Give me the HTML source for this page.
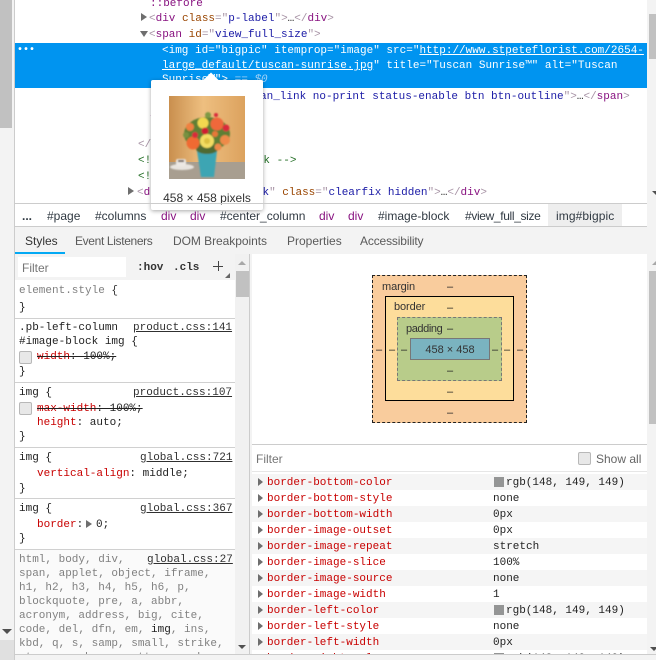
<!DOCTYPE html>
<html><head><meta charset="utf-8"><style>
html,body{margin:0;padding:0;background:#fff}
#r{position:relative;width:656px;height:660px;overflow:hidden;background:#fff;font-family:"Liberation Mono",monospace;font-size:11px;color:#222}
#r div{position:absolute;white-space:pre}
.t{line-height:16px;height:16px}
.t:not(.u){margin-top:1px}
.u{font-family:"Liberation Sans",sans-serif;font-size:12px}
.g{color:#a894a6}.p{color:#881280}.n{color:#994500}.v{color:#1a1aa6}.c{color:#236e25}
.k{color:#c80000}.m{color:#808080}.l{color:#303030;text-decoration:underline}
.tri{width:0;height:0;border-style:solid;border-color:transparent}
.h{height:1px;background:#d0d0d0}
.cb{width:11px;height:11px;background:#e8e8e8;border:1px solid #b8b8b8;border-radius:2px}
s{text-decoration-color:#222}
</style></head><body><div id="r">
<div style="left:0;top:0;width:15px;height:660px;background:#f3f3f3;border-right:1px solid #ccc;box-sizing:border-box"></div>
<div style="left:0;top:0;width:12px;height:128px;background:#c1c1c1"></div>
<div style="left:0;top:640px;width:14px;height:20px;background:#e0e0e0"></div>
<div class="tri" style="left:2px;top:629px;border-width:5px 5px 0;border-top-color:#505050"></div>

<div style="left:647px;top:0;width:9px;height:660px;background:#f3f3f3"></div>
<div style="left:649px;top:14px;width:7px;height:45px;background:#c1c1c1"></div>
<div style="left:649px;top:271px;width:7px;height:153px;background:#c1c1c1"></div>
<div class="tri" style="left:652px;top:191px;border-width:4px 4px 0;border-top-color:#505050"></div>
<div class="tri" style="left:652px;top:261px;border-width:0 4px 4px;border-bottom-color:#a8a8a8"></div>

<div class="t" style="left:150px;top:-5px;color:#881280">::before</div>
<div class="tri" style="left:141px;top:13px;border-width:4px 0 4px 6px;border-left-color:#6e6e6e"></div>
<div class="t" style="left:149px;top:10px"><span class="g">&lt;</span><span class="p">div</span> <span class="n">class</span><span class="g">="</span><span class="v">p-label</span><span class="g">"&gt;</span>…<span class="g">&lt;/</span><span class="p">div</span><span class="g">&gt;</span></div>
<div class="tri" style="left:140px;top:31px;border-width:6px 4px 0;border-top-color:#6e6e6e"></div>
<div class="t" style="left:149px;top:26px"><span class="g">&lt;</span><span class="p">span</span> <span class="n">id</span><span class="g">="</span><span class="v">view_full_size</span><span class="g">"&gt;</span></div>

<div style="left:15px;top:43px;width:632px;height:45px;background:#0094f0"></div>
<div style="left:17px;top:44px;color:#fff;font-weight:bold;line-height:14px;font-size:10px">•••</div>
<div class="t" style="left:162px;top:42px;color:#fff">&lt;img id="bigpic" itemprop="image" src="<u>http://www.stpeteflorist.com/2654-</u></div>
<div class="t" style="left:162px;top:57px;color:#fff"><u>large_default/tuscan-sunrise.jpg</u>" title="Tuscan Sunrise™" alt="Tuscan</div>
<div class="t" style="left:162px;top:71px;color:#fff">Sunrise™"&gt; <span style="color:#9fd2f8">== <i>$0</i></span></div>

<div class="t" style="left:260px;top:88px"><span class="v">an_link no-print status-enable btn btn-outline</span><span class="g">"&gt;</span>…<span class="g">&lt;/</span><span class="p">span</span><span class="g">&gt;</span></div>
<div class="t" style="left:150px;top:105px;color:#881280">/</div>
<div class="t" style="left:138px;top:136px"><span class="g">&lt;/</span></div>
<div class="t" style="left:138px;top:152px;color:#236e25">&lt;!-- end image-block --&gt;</div>
<div class="t" style="left:138px;top:168px;color:#236e25">&lt;!</div>
<div class="tri" style="left:128px;top:187px;border-width:4px 0 4px 6px;border-left-color:#6e6e6e"></div>
<div class="t" style="left:137px;top:184px"><span class="g">&lt;</span><span class="p">div</span> <span class="n">id</span><span class="g">="</span><span class="v">views_block</span><span class="g">"</span> <span class="n">class</span><span class="g">="</span><span class="v">clearfix hidden</span><span class="g">"&gt;</span>…<span class="g">&lt;/</span><span class="p">div</span><span class="g">&gt;</span></div>

<div style="left:151px;top:80px;width:112px;height:130px;background:#fff;border-radius:2px;box-shadow:0 1px 4px rgba(0,0,0,.35)"></div>
<div style="left:205px;top:75px;width:12px;height:12px;background:#fff;transform:rotate(45deg)"></div>
<svg style="position:absolute;left:169px;top:96px" width="76" height="83" viewBox="169 96 76 83">
<defs><linearGradient id="b" x1="0" y1="0" x2="1" y2="0"><stop offset="0" stop-color="#c98f4e"/><stop offset=".45" stop-color="#eebf80"/><stop offset="1" stop-color="#dca25e"/></linearGradient>
<filter id="f" x="-10%" y="-10%" width="120%" height="120%"><feGaussianBlur stdDeviation=".7"/></filter></defs>
<rect x="169" y="96" width="76" height="83" fill="url(#b)"/>
<rect x="169" y="162" width="76" height="17" fill="#a89e90"/>
<g filter="url(#f)">
<ellipse cx="182" cy="167" rx="12" ry="3" fill="#e8e4df"/><rect x="176" y="159" width="10" height="7" rx="2" fill="#ece8e4"/><rect x="178" y="160" width="6" height="2" fill="#6a5a50"/>
<path d="M197 151H217L214 177H201Z" fill="#3ea5b3"/>
<ellipse cx="207" cy="134" rx="23" ry="17" fill="#5f7f35"/>
<ellipse cx="207" cy="149" rx="11" ry="5" fill="#4f6a32"/>
<circle cx="186" cy="135" r="3" fill="#78913f"/>
<circle cx="208" cy="115" r="3" fill="#7f9a45"/>
<circle cx="193" cy="143" r="6.5" fill="#f06a32"/>
<circle cx="207" cy="141" r="7" fill="#f2dc62"/><circle cx="207" cy="141" r="3" fill="#dcc040"/>
<circle cx="203" cy="123" r="5.5" fill="#f3d850"/>
<circle cx="217" cy="124" r="6.5" fill="#f0683a"/>
<circle cx="205" cy="131" r="3.5" fill="#cf1b32"/>
<circle cx="195" cy="135" r="3" fill="#d92a3a"/>
<circle cx="226" cy="128" r="3.5" fill="#d92a3a"/>
<circle cx="190" cy="127" r="4" fill="#f08040"/>
<circle cx="225" cy="140" r="5" fill="#ee8a4a"/>
<circle cx="218" cy="147" r="3.5" fill="#ee8a4a"/>
<circle cx="215" cy="134" r="3" fill="#e87838"/>
<circle cx="216" cy="115" r="2" fill="#d92a3a"/>
</g></svg>
<div class="u" style="left:151px;top:190px;width:112px;text-align:center;color:#333;line-height:16px">458 × 458 pixels</div>

<div style="left:15px;top:203px;width:632px;height:1px;background:#ccc"></div>
<div style="left:548px;top:204px;width:74px;height:22px;background:#eee"></div>
<div class="u t" style="left:22px;top:208px;font-weight:bold;color:#303942">...</div>
<div class="u t" style="left:47px;top:208px;color:#303942">#page</div>
<div class="u t" style="left:95px;top:208px;color:#303942">#columns</div>
<div class="u t" style="left:161px;top:208px;color:#881280">div</div>
<div class="u t" style="left:190px;top:208px;color:#881280">div</div>
<div class="u t" style="left:220px;top:208px;color:#303942">#center_column</div>
<div class="u t" style="left:319px;top:208px;color:#881280">div</div>
<div class="u t" style="left:348px;top:208px;color:#881280">div</div>
<div class="u t" style="left:378px;top:208px;color:#303942">#image-block</div>
<div class="u t" style="left:465px;top:208px;color:#303942;letter-spacing:-.35px">#view_full_size</div>
<div class="u t" style="left:556px;top:208px;color:#303942;letter-spacing:.1px">img#bigpic</div>

<div style="left:15px;top:226px;width:632px;height:28px;background:#f3f3f3;border-top:1px solid #ccc;box-sizing:border-box"></div>
<div style="left:15px;top:252px;width:50px;height:2px;background:#03a9f4"></div>
<div class="u t" style="left:25px;top:233px;color:#333">Styles</div>
<div class="u t" style="left:75px;top:233px;color:#5a5a5a;letter-spacing:-.35px">Event Listeners</div>
<div class="u t" style="left:173px;top:233px;color:#5a5a5a;letter-spacing:-.05px">DOM Breakpoints</div>
<div class="u t" style="left:287px;top:233px;color:#5a5a5a">Properties</div>
<div class="u t" style="left:360px;top:233px;color:#5a5a5a;letter-spacing:-.15px">Accessibility</div>

<div style="left:15px;top:254px;width:220px;height:26px;background:#f3f3f3"></div>
<div style="left:18px;top:257px;width:108px;height:20px;background:#fff"></div>
<div class="u t" style="left:22px;top:260px;color:#757575">Filter</div>
<div class="t" style="left:137px;top:259px;font-weight:bold;color:#333">:hov</div>
<div class="t" style="left:173px;top:259px;font-weight:bold;color:#333">.cls</div>
<div style="left:213px;top:266px;width:10px;height:1px;background:#444"></div>
<div style="left:218px;top:261px;width:1px;height:10px;background:#444"></div>
<div class="tri" style="left:225px;top:273px;border-width:0 0 5px 5px;border-bottom-color:#666"></div>

<div style="left:235px;top:254px;width:14px;height:400px;background:#f1f1f1"></div>
<div style="left:236px;top:271px;width:13px;height:26px;background:#c1c1c1"></div>
<div class="tri" style="left:238px;top:261px;border-width:0 4px 4px;border-bottom-color:#a8a8a8"></div>
<div class="tri" style="left:238px;top:645px;border-width:4px 4px 0;border-top-color:#505050"></div>
<div style="left:249px;top:254px;width:3px;height:400px;background:#f3f3f3;border-left:1px solid #ccc;box-sizing:border-box"></div>

<div class="t" style="left:19px;top:282px;color:#808080">element.style <span style="color:#333">{</span></div>
<div class="t" style="left:19px;top:299px">}</div>
<div class="h" style="left:15px;top:318px;width:220px"></div>
<div class="t" style="left:19px;top:319px">.pb-left-column</div>
<div class="t l" style="left:133px;top:319px">product.css:141</div>
<div class="t" style="left:19px;top:333px">#image-block img {</div>
<div class="cb" style="left:19px;top:351px"></div>
<div class="t" style="left:37px;top:348px"><s><span class="k">width</span>: 100%;</s></div>
<div class="t" style="left:19px;top:363px">}</div>
<div class="h" style="left:15px;top:382px;width:220px"></div>
<div class="t" style="left:19px;top:384px">img {</div>
<div class="t l" style="left:133px;top:384px">product.css:107</div>
<div class="cb" style="left:19px;top:402px"></div>
<div class="t" style="left:37px;top:400px"><s><span class="k">max-width</span>: 100%;</s></div>
<div class="t" style="left:37px;top:414px"><span class="k">height</span>: auto;</div>
<div class="t" style="left:19px;top:428px">}</div>
<div class="h" style="left:15px;top:447px;width:220px"></div>
<div class="t" style="left:19px;top:449px">img {</div>
<div class="t l" style="left:140px;top:449px">global.css:721</div>
<div class="t" style="left:37px;top:465px"><span class="k">vertical-align</span>: middle;</div>
<div class="t" style="left:19px;top:480px">}</div>
<div class="h" style="left:15px;top:498px;width:220px"></div>
<div class="t" style="left:19px;top:500px">img {</div>
<div class="t l" style="left:140px;top:500px">global.css:367</div>
<div class="t" style="left:37px;top:516px"><span class="k">border</span>:</div>
<div class="tri" style="left:86px;top:520px;border-width:4px 0 4px 6px;border-left-color:#6e6e6e"></div>
<div class="t" style="left:96px;top:516px">0;</div>
<div class="t" style="left:19px;top:530px">}</div>
<div class="h" style="left:15px;top:549px;width:220px"></div>
<div style="left:15px;top:550px;width:220px;height:104px;background:#fafafa"></div>
<div class="t m" style="left:19px;top:551px">html, body, div,</div>
<div class="t l" style="left:147px;top:551px">global.css:27</div>
<div class="t m" style="left:19px;top:565px">span, applet, object, iframe,</div>
<div class="t m" style="left:19px;top:579px">h1, h2, h3, h4, h5, h6, p,</div>
<div class="t m" style="left:19px;top:593px">blockquote, pre, a, abbr,</div>
<div class="t m" style="left:19px;top:607px">acronym, address, big, cite,</div>
<div class="t m" style="left:19px;top:621px">code, del, dfn, em, <span style="color:#222">img</span>, ins,</div>
<div class="t m" style="left:19px;top:635px">kbd, q, s, samp, small, strike,</div>
<div class="t m" style="left:19px;top:649px">strong, sub, sup, tt, var, b, u,</div>

<div style="left:372px;top:275px;width:155px;height:148px;box-sizing:border-box;background:#f9cc9d;border:1px dashed #222"></div>
<div style="left:385px;top:296px;width:129px;height:105px;box-sizing:border-box;background:#fddd9b;border:1px solid #000"></div>
<div style="left:397px;top:317px;width:105px;height:64px;box-sizing:border-box;background:#b8cc8a;border:1px dashed #777"></div>
<div style="left:410px;top:338px;width:80px;height:22px;box-sizing:border-box;background:#7ab3c0;border:1px solid #777"></div>
<div class="u t" style="left:382px;top:279px;font-size:11px;color:#333;letter-spacing:-.1px">margin</div>
<div class="u t" style="left:394px;top:299px;font-size:11px;color:#333;letter-spacing:-.1px">border</div>
<div class="u t" style="left:406px;top:321px;font-size:11px;color:#333;letter-spacing:-.4px">padding</div>
<div class="u t" style="left:410px;top:342px;width:80px;text-align:center;font-size:11px;color:#333">458 × 458</div>
<div class="u t" style="left:447px;top:279px;font-size:11px">–</div>
<div class="u t" style="left:447px;top:300px;font-size:11px">–</div>
<div class="u t" style="left:447px;top:321px;font-size:11px">–</div>
<div class="u t" style="left:447px;top:363px;font-size:11px">–</div>
<div class="u t" style="left:447px;top:384px;font-size:11px">–</div>
<div class="u t" style="left:447px;top:405px;font-size:11px">–</div>
<div class="u t" style="left:376px;top:342px;font-size:11px">–</div>
<div class="u t" style="left:389px;top:342px;font-size:11px">–</div>
<div class="u t" style="left:401px;top:342px;font-size:11px">–</div>
<div class="u t" style="left:492px;top:342px;font-size:11px">–</div>
<div class="u t" style="left:504px;top:342px;font-size:11px">–</div>
<div class="u t" style="left:517px;top:342px;font-size:11px">–</div>

<div style="left:252px;top:444px;width:395px;height:1px;background:#ccc"></div>
<div class="u t" style="left:256px;top:451px;color:#757575">Filter</div>
<div class="cb" style="left:578px;top:452px"></div>
<div class="u t" style="left:596px;top:451px;color:#666">Show all</div>
<div style="left:252px;top:471px;width:395px;height:1px;background:#e6e6e6"></div>

<div style="left:252px;top:474px;width:395px;height:16px;background:#f5f5f5"></div>
<div style="left:252px;top:506px;width:395px;height:16px;background:#f5f5f5"></div>
<div style="left:252px;top:538px;width:395px;height:16px;background:#f5f5f5"></div>
<div style="left:252px;top:570px;width:395px;height:16px;background:#f5f5f5"></div>
<div style="left:252px;top:602px;width:395px;height:16px;background:#f5f5f5"></div>
<div style="left:252px;top:634px;width:395px;height:16px;background:#f5f5f5"></div>

<div class="tri" style="left:258px;top:478px;border-width:4px 0 4px 5px;border-left-color:#6e6e6e"></div>
<div class="tri" style="left:258px;top:494px;border-width:4px 0 4px 5px;border-left-color:#6e6e6e"></div>
<div class="tri" style="left:258px;top:510px;border-width:4px 0 4px 5px;border-left-color:#6e6e6e"></div>
<div class="tri" style="left:258px;top:526px;border-width:4px 0 4px 5px;border-left-color:#6e6e6e"></div>
<div class="tri" style="left:258px;top:542px;border-width:4px 0 4px 5px;border-left-color:#6e6e6e"></div>
<div class="tri" style="left:258px;top:558px;border-width:4px 0 4px 5px;border-left-color:#6e6e6e"></div>
<div class="tri" style="left:258px;top:574px;border-width:4px 0 4px 5px;border-left-color:#6e6e6e"></div>
<div class="tri" style="left:258px;top:590px;border-width:4px 0 4px 5px;border-left-color:#6e6e6e"></div>
<div class="tri" style="left:258px;top:606px;border-width:4px 0 4px 5px;border-left-color:#6e6e6e"></div>
<div class="tri" style="left:258px;top:622px;border-width:4px 0 4px 5px;border-left-color:#6e6e6e"></div>
<div class="tri" style="left:258px;top:638px;border-width:4px 0 4px 5px;border-left-color:#6e6e6e"></div>

<div class="t k" style="left:267px;top:474px">border-bottom-color</div><div style="left:494px;top:477px;width:10px;height:10px;background:#949595"></div><div class="t" style="left:506px;top:474px">rgb(148, 149, 149)</div>
<div class="t k" style="left:267px;top:490px">border-bottom-style</div><div class="t" style="left:493px;top:490px">none</div>
<div class="t k" style="left:267px;top:506px">border-bottom-width</div><div class="t" style="left:493px;top:506px">0px</div>
<div class="t k" style="left:267px;top:522px">border-image-outset</div><div class="t" style="left:493px;top:522px">0px</div>
<div class="t k" style="left:267px;top:538px">border-image-repeat</div><div class="t" style="left:493px;top:538px">stretch</div>
<div class="t k" style="left:267px;top:554px">border-image-slice</div><div class="t" style="left:493px;top:554px">100%</div>
<div class="t k" style="left:267px;top:570px">border-image-source</div><div class="t" style="left:493px;top:570px">none</div>
<div class="t k" style="left:267px;top:586px">border-image-width</div><div class="t" style="left:493px;top:586px">1</div>
<div class="t k" style="left:267px;top:602px">border-left-color</div><div style="left:494px;top:605px;width:10px;height:10px;background:#949595"></div><div class="t" style="left:506px;top:602px">rgb(148, 149, 149)</div>
<div class="t k" style="left:267px;top:618px">border-left-style</div><div class="t" style="left:493px;top:618px">none</div>
<div class="t k" style="left:267px;top:634px">border-left-width</div><div class="t" style="left:493px;top:634px">0px</div>
<div class="t k" style="left:267px;top:650px">border-right-color</div><div style="left:494px;top:653px;width:10px;height:10px;background:#949595"></div><div class="t" style="left:506px;top:650px">rgb(148, 149, 149)</div>

<div style="left:15px;top:654px;width:641px;height:6px;background:#f3f3f3;border-top:1px solid #ccc;box-sizing:border-box"></div>
<div class="tri" style="left:650px;top:647px;border-width:4px 4px 0;border-top-color:#505050"></div>
</div></body></html>
